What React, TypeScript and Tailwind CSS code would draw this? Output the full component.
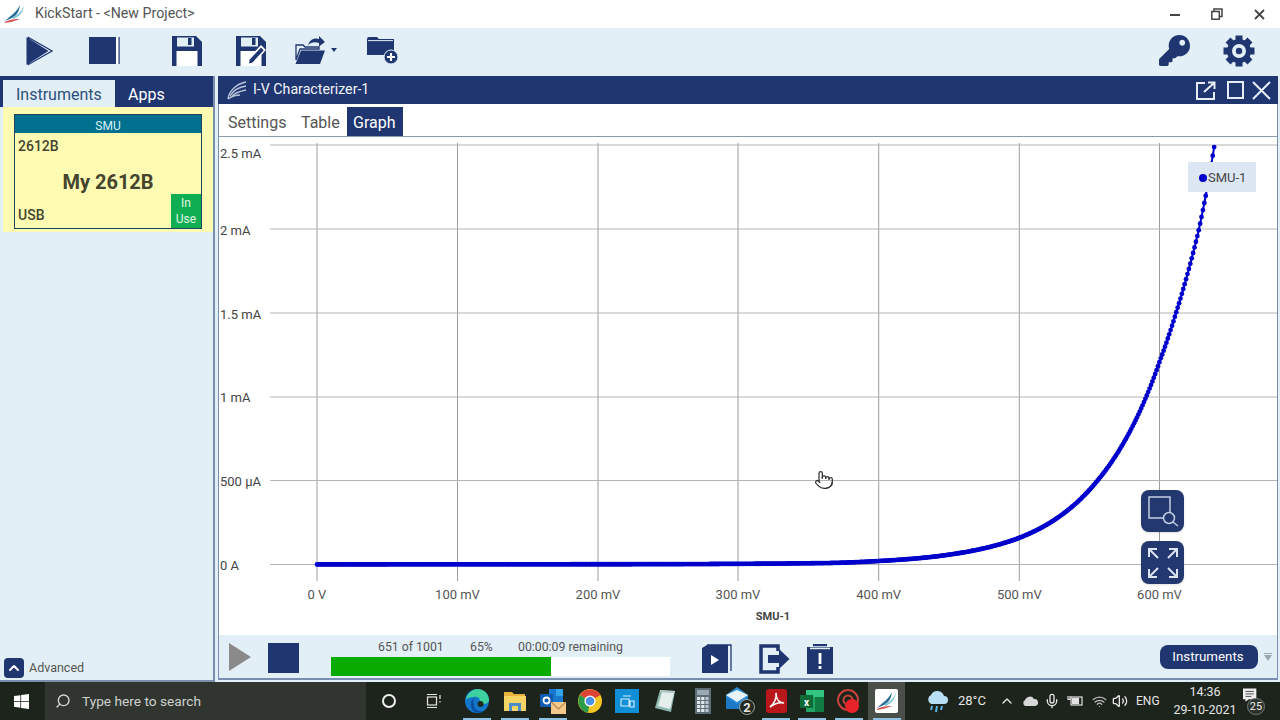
import React from "react";
import { Pointer, Search, ChevronUp, Wifi, Volume2, Mic } from "lucide-react";
import { FaKey } from "react-icons/fa";

const NAVY = "#1f3671";

const table: [number, number][] = [
  [317, 0.1], [660, 0.3], [832, 1.5], [879, 3.5], [960, 11.5], [1019, 26.5], [1098, 84.5],
  [1160, 204], [1176, 251.5], [1199, 335.5], [1205.5, 367.5], [1214.5, 419.5],
];
function curveD(x: number) {
  for (let i = 1; i < table.length; i++) {
    if (x <= table[i][0]) {
      const [x0, d0] = table[i - 1];
      const [x1, d1] = table[i];
      return Math.exp(Math.log(d0) + ((Math.log(d1) - Math.log(d0)) * (x - x0)) / (x1 - x0));
    }
  }
  return table[table.length - 1][1];
}
const points = Array.from({ length: 640 }, (_, v) => {
  const x = 317 + v * 1.404;
  return [x, 564.5 - curveD(x)];
});

function Logo() {
  return (
    <svg width="22" height="20" viewBox="0 0 22 20">
      <path d="M1 17 C6 12 12 9 16 1 C15 8 13 11 8 14 Z" fill="#2a6f96" />
      <path d="M9 13 C14 11 18 7 20 1 C19 9 15 13 9 15 Z" fill="#7fc4d4" />
      <path d="M1 18 C7 15 11 15 16 15 C11 17 7 18 1 19 Z" fill="#d9534f" />
    </svg>
  );
}
function PanelLogo() {
  return (
    <svg width="20" height="19" viewBox="0 0 20 19" fill="none" stroke="#b9c4dc" strokeWidth="1.3">
      <path d="M1 18 C2 10 9 3 19 1" />
      <path d="M3 15 C6 10 12 6 19 5" />
      <path d="M5 15 C9 11 14 10 19 9" />
      <path d="M1 18 C5 15 9 14 13 14" />
    </svg>
  );
}
function PlayBig() {
  return (
    <svg width="28" height="30" viewBox="0 0 28 30">
      <path d="M2.5 1.5 L26 15 L2.5 28.5 Z" fill="none" stroke={NAVY} strokeWidth="1.3" />
      <path d="M0.5 1 L22.5 15 L0.5 29 Z" fill={NAVY} />
    </svg>
  );
}
function StopBig() {
  return (
    <svg width="31" height="27" viewBox="0 0 31 27">
      <rect x="0" y="0" width="27" height="27" fill={NAVY} />
      <rect x="27" y="0" width="2.5" height="27" fill="#ffffff" />
      <rect x="29.5" y="0" width="1.2" height="27" fill={NAVY} />
    </svg>
  );
}
function Save() {
  return (
    <svg width="30" height="30" viewBox="0 0 30 30">
      <path d="M0 0 H24 L30 6 V30 H0 Z" fill={NAVY} />
      <rect x="5" y="1.5" width="17" height="9" fill="#e3eff7" />
      <rect x="16" y="2" width="3.5" height="7" fill={NAVY} />
      <rect x="4.5" y="15" width="21" height="15" fill="#ffffff" />
    </svg>
  );
}
function SaveAs() {
  return (
    <svg width="30" height="30" viewBox="0 0 30 30">
      <path d="M0 0 H24 L30 6 V30 H0 Z" fill={NAVY} />
      <rect x="5" y="1.5" width="17" height="9" fill="#e3eff7" />
      <rect x="16" y="2" width="3.5" height="7" fill={NAVY} />
      <rect x="4.5" y="15" width="21" height="15" fill="#ffffff" />
      <path d="M11 29 L12 22.5 L25 9 L30 14 L17 28 Z" fill="#ffffff" />
      <path d="M13 27.5 L13.8 23.5 L25 11.5 L27.7 14.2 L16.5 26.5 Z" fill={NAVY} />
    </svg>
  );
}
function OpenFolder() {
  return (
    <svg width="31" height="30" viewBox="0 0 31 30">
      <path d="M13 9 C15 3 20 1.5 24 3 L24 0 L30 6 L24 10.5 L24 7 C20 5.5 16 6 13 9 Z" fill={NAVY} />
      <path d="M1 9 H8 L10 11 H24 V13 H5 L1 24 Z" fill="none" stroke={NAVY} strokeWidth="1.3" />
      <path d="M6 14.5 H30 L25 28 H0.5 Z" fill={NAVY} />
    </svg>
  );
}
function NewFolder() {
  return (
    <svg width="31" height="27" viewBox="0 0 31 27">
      <path d="M0 2 Q0 0 2 0 H10 L12 2 H27 V18 H0 Z" fill={NAVY} />
      <path d="M1 3.6 H26" stroke="#e3eff7" strokeWidth="1" />
      <circle cx="24" cy="20" r="7" fill={NAVY} stroke="#e3eff7" strokeWidth="1" />
      <path d="M20 20 H28 M24 16 V24" stroke="#fff" strokeWidth="2.2" />
    </svg>
  );
}
function Gear() {
  const teeth = [0, 45, 90, 135, 180, 225, 270, 315];
  return (
    <svg width="32" height="32" viewBox="0 0 32 32">
      {teeth.map((a) => (
        <rect key={a} x="12.5" y="0.5" width="7" height="7" fill={NAVY} transform={`rotate(${a} 16 16)`} />
      ))}
      <circle cx="16" cy="16" r="9.5" fill="none" stroke={NAVY} strokeWidth="5" />
      <circle cx="16" cy="16" r="3.2" fill={NAVY} />
    </svg>
  );
}
function BookPlay() {
  return (
    <svg width="30" height="30" viewBox="0 0 30 30">
      <path d="M5 1 H29 V27" fill="none" stroke={NAVY} strokeWidth="1.3" />
      <path d="M0 4 L5 1 H26 V29 H0 Z" fill={NAVY} />
      <path d="M9 11 L17 16 L9 21 Z" fill="#fff" />
    </svg>
  );
}
function Exit() {
  return (
    <svg width="31" height="30" viewBox="0 0 31 30">
      <path d="M19 7 V2 H2 V28 H19 V23" fill="none" stroke={NAVY} strokeWidth="3.5" />
      <path d="M9 11 H20 V5 L30.5 15 L20 25 V19 H9 Z" fill={NAVY} />
    </svg>
  );
}
function Clip() {
  return (
    <svg width="26" height="30" viewBox="0 0 26 30">
      <rect x="0" y="3" width="26" height="27" fill={NAVY} />
      <rect x="6" y="0" width="14" height="2.2" fill={NAVY} />
      <rect x="3" y="3.6" width="20" height="1.6" fill="#e3eff7" />
      <rect x="11.6" y="9" width="2.8" height="11" fill="#fff" />
      <rect x="11.6" y="22" width="2.8" height="3" fill="#fff" />
    </svg>
  );
}
function WinLogo() {
  return (
    <svg width="15" height="15" viewBox="0 0 16 16" fill="#fff">
      <path d="M0 2.2 L6.8 1.2 V7.4 H0 Z M7.6 1.1 L16 0 V7.4 H7.6 Z M0 8.2 H6.8 V14.6 L0 13.7 Z M7.6 8.2 H16 V16 L7.6 14.8 Z" />
    </svg>
  );
}
function TaskView() {
  return (
    <svg width="16" height="16" viewBox="0 0 16 16" fill="none" stroke="#e5e5e5" strokeWidth="1.2">
      <rect x="1.5" y="4" width="9" height="8" />
      <path d="M1 1.5 H11 M1 14.5 H11 M14 2 V6 M14 8 V9.5" />
    </svg>
  );
}
function Edge() {
  return (
    <svg width="24" height="24" viewBox="0 0 24 24">
      <circle cx="12" cy="12" r="12" fill="#1377c9" />
      <path d="M1 11 C2 3 9 0 13 0 C19 0 24 5 24 11 C24 14 21 15 18 15 C15 15 14 14 15 12 C15 9 12 7 9 8 C5 8 2 9 1 11 Z" fill="#3fd0a0" />
      <path d="M9 16 C9 20 13 23 18 22 C15 25 8 24 6 18 C5 14 7 10 10 9 C8 11 8 14 9 16 Z" fill="#0c4da2" />
      <circle cx="15.5" cy="15" r="3" fill="#1f2a20" />
    </svg>
  );
}
function Folder() {
  return (
    <svg width="22" height="20" viewBox="0 0 22 20">
      <path d="M0 1 H8 L10 3 H21 V6 H0 Z" fill="#e6b33c" />
      <rect x="0" y="5" width="22" height="15" fill="#f6d565" />
      <rect x="5" y="12" width="12" height="8" fill="#4a8dc4" />
      <rect x="8" y="15" width="6" height="5" fill="#f6d565" />
    </svg>
  );
}
function Outlook() {
  return (
    <svg width="26" height="26" viewBox="0 0 26 26">
      <rect x="9" y="1" width="14" height="14" fill="#1a78d0" />
      <rect x="16" y="1" width="7" height="7" fill="#35a5ea" />
      <rect x="0" y="6" width="13" height="13" rx="1" fill="#0f5cb3" />
      <circle cx="6.5" cy="12.5" r="3" fill="none" stroke="#fff" strokeWidth="1.8" />
      <rect x="11" y="14" width="15" height="12" fill="#f2c98a" />
      <path d="M11 14 L18.5 21 L26 14" fill="none" stroke="#b98a4d" strokeWidth="1.2" />
    </svg>
  );
}
function Chrome() {
  return (
    <svg width="24" height="24" viewBox="0 0 24 24">
      <circle cx="12" cy="12" r="12" fill="#f3c623" />
      <path d="M12 12 L2 6 A12 12 0 0 1 22.4 6 Z" fill="#dc4437" />
      <path d="M12 12 L2 6 A12 12 0 0 0 10 23.8 Z" fill="#2c9c4b" />
      <circle cx="12" cy="12" r="5.6" fill="#fff" />
      <circle cx="12" cy="12" r="4.3" fill="#4a8fe8" />
    </svg>
  );
}
function StoreApp() {
  return (
    <svg width="24" height="24" viewBox="0 0 24 24">
      <rect width="24" height="24" fill="#108fd6" />
      <path d="M6 10 H14 V17 H6 Z M15 12 H19 V18 H15 Z M8 7 H16" fill="none" stroke="#d8eefa" strokeWidth="1.1" />
    </svg>
  );
}
function Notes() {
  return (
    <svg width="22" height="24" viewBox="0 0 22 24">
      <path d="M6 1 L21 2 L17 23 L1 19 Z" fill="#8fb9b0" />
      <path d="M8 3 L20 4 L16 20 L4 17 Z" fill="#e4efec" />
      <path d="M6 1 L21 2 L20.5 4 L6 3 Z" fill="#b4c8c4" />
    </svg>
  );
}
function Calc() {
  const cells = [0, 1, 2, 3].flatMap((r) => [0, 1, 2].map((c) => [r, c]));
  return (
    <svg width="16" height="26" viewBox="0 0 16 26">
      <rect width="16" height="26" fill="#5d6d78" />
      <rect x="2" y="2" width="12" height="5" fill="#9aa8b0" />
      {cells.map(([r, c]) => (
        <rect key={`${r}${c}`} x={2 + c * 4.2} y={9 + r * 4} width="3.2" height="3" fill={c === 2 ? "#bcc6cc" : "#dfe5e8"} />
      ))}
    </svg>
  );
}
function Mail() {
  return (
    <svg width="30" height="28" viewBox="0 0 30 28">
      <path d="M0 8 L11 0 L22 8 V22 H0 Z" fill="#2f8fd8" />
      <path d="M0 8 L11 15 L22 8 L11 3 Z" fill="#e8f2fa" />
      <path d="M0 10 L11 17 L22 10 V22 H0 Z" fill="#1d78c6" />
      <circle cx="21" cy="20" r="7.5" fill="#222a22" stroke="#9aa0a0" strokeWidth="1" />
      <text x="21" y="24.5" textAnchor="middle" fontSize="13" fontWeight="700" fill="#e8e8e8">2</text>
    </svg>
  );
}
function Pdf() {
  return (
    <svg width="21" height="24" viewBox="0 0 21 24">
      <rect width="21" height="24" rx="3" fill="#b9171c" />
      <path d="M4 18 C8 15 11 9 10 4 C10 10 13 14 18 14 C13 13 8 15 4 18 Z" fill="none" stroke="#fff" strokeWidth="1.6" />
    </svg>
  );
}
function Excel() {
  return (
    <svg width="24" height="24" viewBox="0 0 24 24">
      <rect x="6" y="1" width="18" height="22" fill="#21a366" />
      <rect x="6" y="1" width="18" height="7" fill="#33c481" />
      <rect x="15" y="8" width="9" height="15" fill="#107c41" />
      <rect x="0" y="6" width="13" height="13" fill="#0e6b36" />
      <text x="6.5" y="16.5" textAnchor="middle" fontSize="10" fontWeight="700" fill="#fff">x</text>
    </svg>
  );
}
function RedApp() {
  return (
    <svg width="24" height="26" viewBox="0 0 24 26">
      <circle cx="11" cy="12" r="10" fill="none" stroke="#c7423d" strokeWidth="2" />
      <circle cx="11" cy="12" r="4.5" fill="none" stroke="#c7423d" strokeWidth="2" />
      <circle cx="15" cy="18" r="7" fill="#e8242a" />
    </svg>
  );
}
function KsTask() {
  return (
    <div className="w-[23px] h-[24px] bg-white rounded-[2px] flex items-center justify-center">
      <Logo />
    </div>
  );
}
function CloudRain() {
  return (
    <svg width="22" height="24" viewBox="0 0 22 24">
      <path d="M5 15 A5 5 0 0 1 5 6 A7 7 0 0 1 18 7 A4 4 0 0 1 18 15 Z" fill="#b8dff5" />
      <path d="M6 17 L5 21 M11 17 L10 23 M16 17 L15 21" stroke="#5ab1e8" strokeWidth="2" />
    </svg>
  );
}
function WhiteCloud() {
  return (
    <svg width="18" height="12" viewBox="0 0 18 12">
      <path d="M4 11 A3.5 3.5 0 0 1 4 5 A5 5 0 0 1 13 4 A3.5 3.5 0 0 1 14 11 Z" fill="#d8d8d8" />
    </svg>
  );
}
function Battery() {
  return (
    <svg width="16" height="14" viewBox="0 0 16 14" fill="none" stroke="#e2e2e2" strokeWidth="1.2">
      <rect x="4" y="3" width="11" height="8" />
      <rect x="5.5" y="4.5" width="6" height="5" fill="#e2e2e2" />
      <path d="M1 2 V5 M3 2 V5 M0.5 5.5 H3.5" />
    </svg>
  );
}
function Notif() {
  return (
    <div className="relative w-[24px] h-[26px] pl-[2px]">
      <svg width="15" height="16" viewBox="0 0 18 18" fill="#eee">
        <path d="M0 0 H16 V13 H7 L3 16 V13 H0 Z" />
        <path d="M3 3.5 H13 M3 6.5 H13 M3 9.5 H10" stroke="#333" strokeWidth="1" />
      </svg>
      <span className="absolute right-0 bottom-[-1px] w-[18px] h-[17px] rounded-full bg-[#2c332c] border border-[#777] text-[11px] leading-[15px] text-center text-[#eee]">25</span>
    </div>
  );
}

function Cell({ className, active, children }: { className: string; active?: boolean; children: React.ReactNode }) {
  return (
    <div className={`relative h-full flex items-center justify-center ${className}`}>
      {children}
      {active && <div className="absolute bottom-0 left-1/2 -translate-x-1/2 w-[28px] h-[2px] bg-[#8fc1e3]" />}
    </div>
  );
}

function Chart() {
  const xs = [
    [317, "0 V"], [457.5, "100 mV"], [598, "200 mV"], [738, "300 mV"], [878.7, "400 mV"], [1019.3, "500 mV"], [1159.5, "600 mV"],
  ] as [number, string][];
  const ys = [
    [145, 153, "2.5 mA"], [229, 230, "2 mA"], [313, 314, "1.5 mA"], [397, 397, "1 mA"], [480.5, 481, "500 µA"], [564.5, 565, "0 A"],
  ] as [number, number, string][];
  const poly = points.map((p) => p.join(",")).join(" ");
  return (
    <svg width="1058" height="498" viewBox="219 137 1058 498" className="block">
      {xs.map(([x]) => (
        <line key={x} x1={x} x2={x} y1="143" y2="581" stroke="#9c9c9c" strokeWidth="1" />
      ))}
      {ys.map(([y]) => (
        <line key={y} x1="270" x2="1277" y1={y} y2={y} stroke="#b4b4b4" strokeWidth="1" />
      ))}
      {ys.map(([y, ty, t]) => (
        <text key={t} x="220" y={ty + 4.5} fontSize="13" fill="#444">{t}</text>
      ))}
      {xs.map(([x, t]) => (
        <text key={t} x={x} y="598.5" fontSize="13" textAnchor="middle" fill="#555">{t}</text>
      ))}
      <text x="773" y="620" fontSize="11" fontWeight="700" textAnchor="middle" fill="#444">SMU-1</text>
      <polyline points={poly} fill="none" stroke="#0000cc" strokeWidth="2" />
      {points.map(([x, y], i) => (
        <circle key={i} cx={x} cy={y} r="2.4" fill="#0000cc" />
      ))}
    </svg>
  );
}

export default function App() {
  return (
    <div className="w-[1280px] h-[720px] overflow-hidden flex flex-col bg-[#e3eff7] font-[family-name:Roboto,sans-serif]">
      {/* Title bar */}
      <div className="h-[28px] bg-white flex items-center shrink-0">
        <div className="ml-[4px] w-[31px]"><Logo /></div>
        <span className="text-[14.2px] text-[#555]">KickStart - &lt;New Project&gt;</span>
        <div className="ml-auto flex items-center">
          <div className="w-[42px] flex justify-center"><div className="w-[10px] h-[2px] bg-[#444] mt-[2px]" /></div>
          <div className="w-[42px] flex justify-center">
            <svg width="12" height="12" viewBox="0 0 12 12" fill="none" stroke="#444" strokeWidth="1.5">
              <rect x="0.8" y="3.5" width="7.5" height="7.7" />
              <path d="M3 3 V1 H11 V8.5 H8.5" />
            </svg>
          </div>
          <div className="w-[42px] flex justify-center">
            <svg width="11" height="11" viewBox="0 0 11 11" stroke="#444" strokeWidth="1.8"><path d="M1 1 L10 10 M10 1 L1 10" /></svg>
          </div>
        </div>
      </div>
      {/* Toolbar */}
      <div className="h-[48px] shrink-0 flex items-center pb-[3px]">
        <div className="ml-[26px] w-[63px]"><PlayBig /></div>
        <div className="w-[83px]"><StopBig /></div>
        <div className="w-[64px]"><Save /></div>
        <div className="w-[59px]"><SaveAs /></div>
        <div className="w-[36px]"><OpenFolder /></div>
        <div className="w-[36px] pb-[2px]"><div className="w-0 h-0 border-x-[3px] border-x-transparent border-t-[4px] border-t-[#1f3671]" /></div>
        <div><NewFolder /></div>
        <div className="ml-auto mr-[25px] flex items-center gap-[33px]">
          <FaKey className="w-[31px] h-[31px] text-[#1f3671]" />
          <Gear />
        </div>
      </div>
      {/* Main */}
      <div className="h-[606px] shrink-0 flex">
        <div className="w-[215px] shrink-0 flex flex-col border-r-2 border-b-2 border-[#7a8fb0]">
          <div className="h-[31px] bg-[#1f3671] flex items-end pl-[3px]">
            <div className="w-[112px] h-[27px] bg-[#e3eff7] text-[16px] leading-[29px] pl-[13px] text-[#2f5080]">Instruments</div>
            <div className="pl-[13px] text-[16px] leading-[29px] h-[27px] text-white">Apps</div>
          </div>
          <div className="ml-[3px] w-[210px] h-[125px] bg-[#fdfbb2] pl-[11px] pt-[7px]">
            <div className="relative w-[188px] h-[115px] border border-[#1c4660] flex flex-col text-[#44442f] font-bold">
              <div className="h-[18px] bg-[#00708f] text-[#d8f0f5] text-[12px] font-normal leading-[22px] text-center">SMU</div>
              <div className="flex-1 flex flex-col">
                <div className="pl-[3px] pt-[5px] text-[14px] font-medium leading-[16px]">2612B</div>
                <div className="text-[20px] text-center leading-[24px] mt-[16px]">My 2612B</div>
                <div className="pl-[3px] mt-auto pb-[5px] text-[14px] font-medium leading-[16px]">USB</div>
              </div>
              <div className="absolute right-0 bottom-0 w-[30px] h-[34px] bg-[#0fae52] text-[#e0f5e6] text-[12px] font-normal leading-[16px] text-center pt-[1px]">In<br />Use</div>
            </div>
          </div>
          <div className="mt-auto mb-[2px] ml-[4px] flex items-center gap-[5px]">
            <div className="w-[20px] h-[20px] rounded-[4px] bg-[#1f3671] flex items-center justify-center">
              <ChevronUp className="w-[16px] h-[16px] text-white" strokeWidth={3} />
            </div>
            <span className="text-[12.5px] text-[#555]">Advanced</span>
          </div>
        </div>
        <div className="ml-[3px] w-[1060px] h-[604px] flex flex-col border-x border-b-2 border-[#7a8fb0] mb-[2px]">
          <div className="h-[28px] bg-[#1f3671] shrink-0 -mx-px flex items-center text-white pl-[9px]">
            <PanelLogo />
            <span className="ml-[6px] text-[14.2px] text-[#f0f3fa]">I-V Characterizer-1</span>
            <div className="ml-auto mr-[7px] flex items-center">
              <svg width="20" height="19" viewBox="0 0 20 19" fill="none" stroke="#e8eef8" strokeWidth="2">
                <path d="M9 2 H1 V18 H18 V11" />
                <path d="M8 11 L18 2 M12 1.5 H18.5 V8" />
              </svg>
              <div className="ml-[11px] w-[17px] h-[18px] border-2 border-[#e8eef8]" />
              <svg className="ml-[8px]" width="19" height="19" viewBox="0 0 19 19" stroke="#e8eef8" strokeWidth="2"><path d="M1 1 L18 18 M18 1 L1 18" /></svg>
            </div>
          </div>
          <div className="h-[33px] bg-white shrink-0 border-b border-[#8d99ad] flex items-end pl-[9px] text-[16px] text-[#555]">
            <span className="h-[29px] leading-[31px] w-[73px]">Settings</span>
            <span className="h-[29px] leading-[31px] w-[46px]">Table</span>
            <span className="h-[29px] leading-[31px] bg-[#1f3671] text-white px-[6px] w-[56px]">Graph</span>
          </div>
          <div className="relative h-[498px] bg-white shrink-0">
            <Chart />
            <div className="absolute left-[969px] top-[25px] w-[68px] h-[30px] bg-[#dde6f3] flex items-center pl-[11px] pt-[1px] gap-[1px] text-[13px] text-[#444]">
              <span className="w-[8px] h-[8px] rounded-full bg-[#0000cc]" />
              <span>SMU-1</span>
            </div>
            <div className="absolute left-[922px] top-[353px] w-[43px] h-[42px] rounded-lg bg-[#22386f] shadow-sm flex items-center justify-center">
              <svg width="32" height="32" viewBox="0 0 32 32" fill="none" stroke="#c4cfe4" strokeWidth="1.5">
                <rect x="2" y="2" width="21" height="21" />
                <circle cx="22" cy="23" r="5.5" fill="#22386f" />
                <path d="M26 27 L31 31" />
              </svg>
            </div>
            <div className="absolute left-[922px] top-[404px] w-[43px] h-[43px] rounded-lg bg-[#22386f] shadow-sm flex items-center justify-center">
              <svg width="32" height="32" viewBox="0 0 32 32" fill="none" stroke="#dbe3f1" strokeWidth="2">
                <path d="M2 10 V2 H10 M2 2 L11 11" />
                <path d="M22 2 H30 V10 M30 2 L21 11" />
                <path d="M2 22 V30 H10 M2 30 L11 21" />
                <path d="M22 30 H30 V22 M30 30 L21 21" />
              </svg>
            </div>
            <Pointer className="absolute left-[595px] top-[330px] w-[20px] h-[26px] text-[#333]" strokeWidth={1.5} />
          </div>
          <div className="flex-1 flex items-center bg-[#e3eff7]">
            <div className="ml-[10px] w-0 h-0 border-y-[14px] border-y-transparent border-l-[22px] border-l-[#8a8a8a]" />
            <div className="ml-[17px] mt-[2px] w-[31px] h-[30px] bg-[#1f3671]" />
            <div className="ml-[32px] w-[339px] flex flex-col mt-[3px]">
              <div className="flex text-[12.3px] leading-[14px] text-[#555] pl-[47px] h-[16px]">
                <span className="w-[92px]">651 of 1001</span>
                <span className="w-[48px]">65%</span>
                <span>00:00:09 remaining</span>
              </div>
              <div className="h-[19px] mt-[1px] bg-white">
                <div className="h-full bg-[#0aab00]" style={{ width: "65%" }} />
              </div>
            </div>
            <div className="ml-[32px] mt-[4px]"><BookPlay /></div>
            <div className="ml-[27px] mt-[4px]"><Exit /></div>
            <div className="ml-[17px] mt-[4px]"><Clip /></div>
            <div className="ml-auto mr-[6px] w-[98px] h-[24px] rounded-lg bg-[#1f3671] text-white text-[13.3px] leading-[24px] text-center pr-[2px]">Instruments</div>
            <div className="mr-[5px] flex flex-col items-center gap-[1px]">
              <div className="w-[8px] h-[1px] bg-[#9aa5b0]" />
              <div className="w-0 h-0 border-x-[4px] border-x-transparent border-t-[6px] border-t-[#9aa5b0]" />
            </div>
          </div>
        </div>
      </div>
      {/* Taskbar */}
      <div className="flex-1 bg-[#1d241b] flex items-center text-[#e5e5e5]">
        <div className="w-[45px] flex justify-center pr-[3px]"><WinLogo /></div>
        <div className="w-[321px] h-full bg-[#303530] flex items-center pl-[10px] gap-[11px] text-[13.7px] text-[#cfd2cf]">
          <Search className="w-[16px] h-[16px] -scale-x-100 text-[#d8d8d8]" />
          <span>Type here to search</span>
        </div>
        <Cell className="w-[46px]"><div className="w-[14px] h-[14px] rounded-full border-2 border-[#f0f0f0]" /></Cell>
        <Cell className="w-[44px]"><TaskView /></Cell>
        <Cell className="w-[42px]" active><Edge /></Cell>
        <Cell className="w-[34px]" active><Folder /></Cell>
        <Cell className="w-[42px]" active><Outlook /></Cell>
        <Cell className="w-[32px]"><Chrome /></Cell>
        <Cell className="w-[42px]"><StoreApp /></Cell>
        <Cell className="w-[34px]"><Notes /></Cell>
        <Cell className="w-[42px]"><Calc /></Cell>
        <Cell className="w-[34px]"><Mail /></Cell>
        <Cell className="w-[36px]" active><Pdf /></Cell>
        <Cell className="w-[36px]" active><Excel /></Cell>
        <Cell className="w-[38px]" active><RedApp /></Cell>
        <Cell className="w-[37px] bg-[#4a4f4a]" active><KsTask /></Cell>
        <div className="ml-[21px] w-[24px]"><CloudRain /></div>
        <span className="ml-[8px] w-[38px] text-[13px]">28°C</span>
        <ChevronUp className="w-[16px] h-[16px] ml-[3px]" />
        <div className="ml-[6px] w-[20px]"><WhiteCloud /></div>
        <Mic className="w-[16px] h-[20px] ml-[3px]" />
        <div className="ml-[7px] w-[22px]"><Battery /></div>
        <Wifi className="w-[15px] h-[15px] ml-[3px] text-[#bbb]" />
        <Volume2 className="w-[16px] h-[16px] ml-[5px]" />
        <span className="ml-[8px] text-[12px] w-[30px]">ENG</span>
        <div className="w-[72px] text-[12.5px] leading-[18px] text-center ml-[3px]">
          <div>14:36</div>
          <div>29-10-2021</div>
        </div>
        <Notif />
      </div>
    </div>
  );
}
